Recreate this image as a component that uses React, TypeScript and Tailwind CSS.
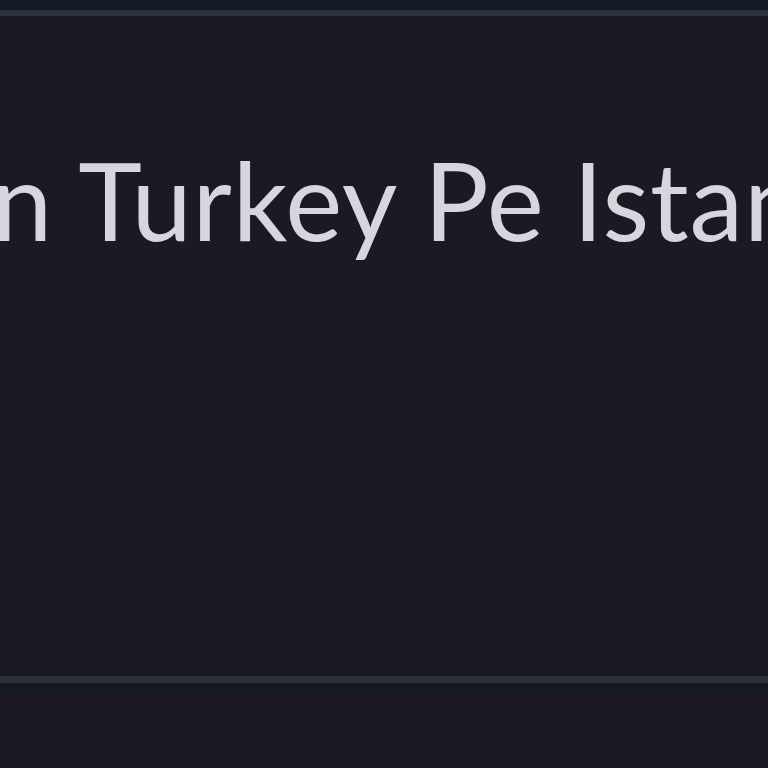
export default function App() {
  return (
    <div className="w-[768px] h-[768px] flex flex-col bg-[#1a1a23] overflow-hidden">
      <div className="h-[10px] bg-[#141a24]" />
      <div className="h-[6px] bg-[#2a313b]" />
      <div className="flex-1 overflow-hidden">
        <div
          className="mt-[119px] ml-[-8px] whitespace-nowrap text-[108px] leading-[1.2] tracking-[0.8px] text-[#d6d6dc]"
          style={{ fontFamily: 'Lato, "Open Sans", sans-serif' }}
        >
          n Turkey Pe Istanbul
        </div>
      </div>
      <div className="h-[7px] bg-[#2a313b]" />
      <div className="h-[10px] bg-[#141a22]" />
      <div className="h-[75px] bg-[#1b1a24]" />
    </div>
  );
}
